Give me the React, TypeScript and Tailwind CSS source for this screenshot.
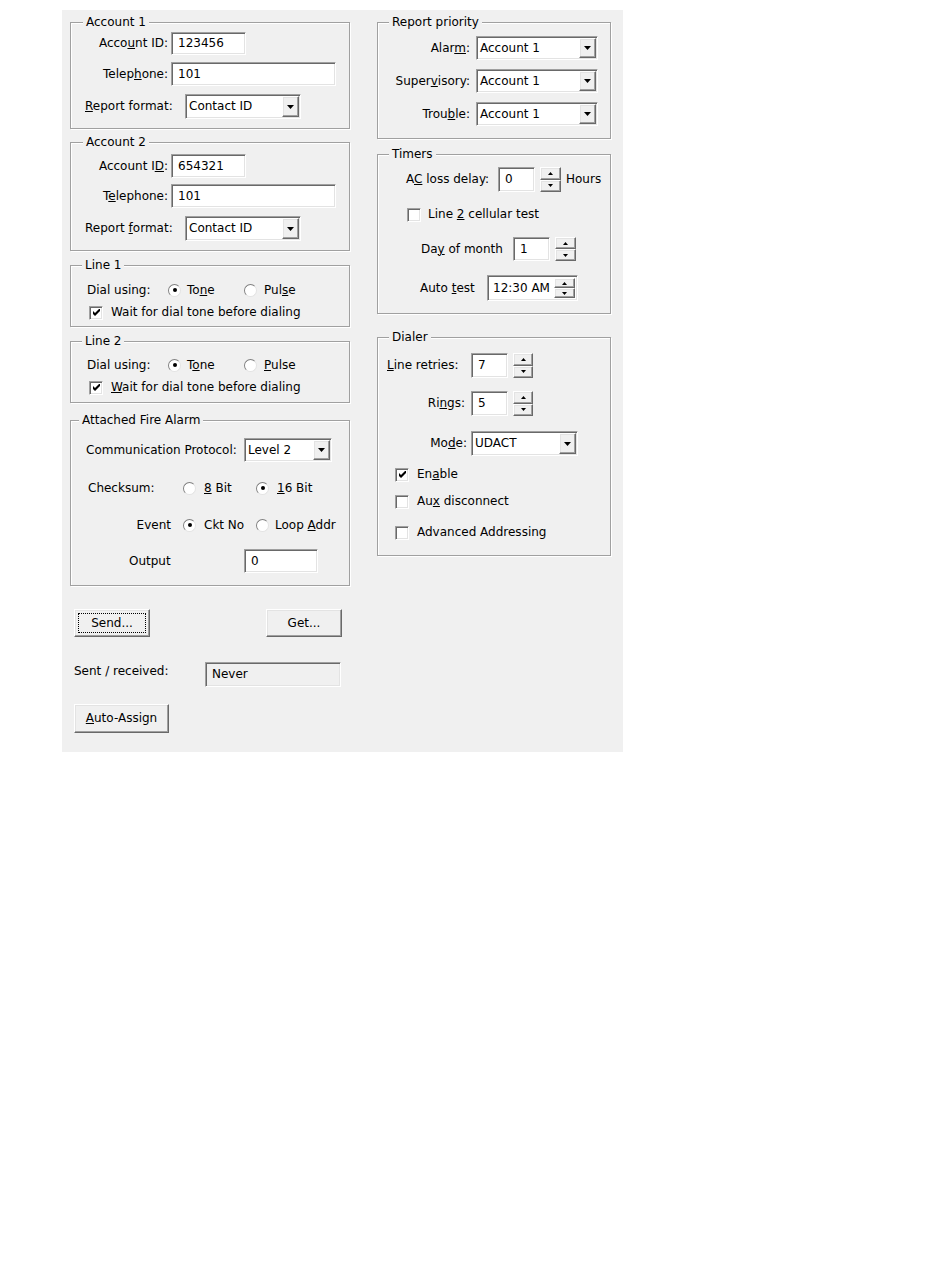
import React from 'react'

const sunken =
  'border border-t-[#a0a0a0] border-l-[#a0a0a0] border-r-white border-b-white shadow-[inset_1px_1px_0_#696969,inset_-1px_-1px_0_#e3e3e3]'
const raised =
  'border border-t-white border-l-white border-r-[#696969] border-b-[#696969] shadow-[inset_-1px_-1px_0_#a0a0a0,inset_1px_1px_0_#e3e3e3]'

function Group({
  title,
  legend,
  className,
  children,
}: {
  title: React.ReactNode
  legend: string
  className: string
  children: React.ReactNode
}) {
  return (
    <fieldset
      className={`flex shrink-0 flex-col border border-[#a0a0a0] shadow-[inset_1px_1px_0_#fff,1px_1px_0_#fff] ${className}`}
    >
      <legend className={`bg-[#f0f0f0] px-[3px] leading-[14px] ${legend}`}>{title}</legend>
      {children}
    </fieldset>
  )
}

function Edit({ value, className, bg = 'bg-white' }: { value: string; className: string; bg?: string }) {
  return (
    <div className={`flex shrink-0 items-center pl-[6px] ${sunken} ${bg} ${className}`}>
      <span>{value}</span>
    </div>
  )
}

function DownArrow() {
  return (
    <svg width="7" height="4" viewBox="0 0 7 4">
      <path d="M0 0h7L3.5 4z" fill="#000" />
    </svg>
  )
}

function Combo({ value, className }: { value: string; className: string }) {
  return (
    <div className={`flex shrink-0 items-stretch bg-white ${sunken} ${className}`}>
      <span className="flex flex-1 items-center pl-[3px]">{value}</span>
      <div className="flex p-[1px]">
        <div className={`flex w-[17px] items-center justify-center bg-[#f0f0f0] ${raised}`}>
          <DownArrow />
        </div>
      </div>
    </div>
  )
}

function SpinBtn({ up }: { up?: boolean }) {
  return (
    <div className={`flex flex-1 items-center justify-center bg-[#f0f0f0] ${raised}`}>
      <svg width="5" height="3" viewBox="0 0 5 3">
        <path d={up ? 'M2.5 0L5 3H0z' : 'M0 0h5L2.5 3z'} fill="#000" />
      </svg>
    </div>
  )
}

function Spinner({ className }: { className: string }) {
  return (
    <div className={`flex shrink-0 flex-col ${className}`}>
      <SpinBtn up />
      <SpinBtn />
    </div>
  )
}

function Radio({ checked }: { checked?: boolean }) {
  return (
    <span className="flex h-[13px] w-[13px] shrink-0 items-center justify-center rounded-full border border-t-[#808080] border-l-[#808080] border-r-[#e3e3e3] border-b-[#e3e3e3] bg-white">
      {checked && <span className="h-[4px] w-[4px] rounded-full bg-black" />}
    </span>
  )
}

function Check({ checked }: { checked?: boolean }) {
  return (
    <span className={`flex h-[14px] w-[14px] shrink-0 items-center justify-center bg-white ${sunken}`}>
      {checked && (
        <svg width="7" height="7" viewBox="0 0 7 7">
          <polygon points="0,2 2,4 7,-1 7,2 2,7 0,5" fill="#000" />
        </svg>
      )}
    </span>
  )
}

function Button({ children, className, focus }: { children: React.ReactNode; className: string; focus?: boolean }) {
  return (
    <div className={`flex shrink-0 bg-[#f0f0f0] p-[3px] ${raised} ${className}`}>
      <span
        className={`flex flex-1 items-center justify-center border border-dotted ${focus ? 'border-black' : 'border-transparent'}`}
      >
        {children}
      </span>
    </div>
  )
}

export default function App() {
  return (
    <div className="min-h-[1267px] bg-white pl-[62px] pt-[10px] font-['DejaVu_Sans',sans-serif] text-[12px] leading-[15px] text-black">
      <div className="flex h-[742px] w-[561px] gap-[27px] bg-[#f0f0f0] pl-[8px]">
        {/* left column */}
        <div className="flex w-[280px] flex-col">
          <Group title="Account 1" legend="ml-[12px]" className="mt-[5px] h-[114px]">
            <div className="mt-[3px] flex items-center">
              <span className="w-[97px] text-right">
                Acco<u>u</u>nt ID:
              </span>
              <Edit value="123456" className="ml-[3px] h-[23px] w-[75px]" />
            </div>
            <div className="mt-[7px] flex items-center">
              <span className="w-[97px] text-right">
                Telep<u>h</u>one:
              </span>
              <Edit value="101" className="ml-[3px] h-[24px] w-[165px]" />
            </div>
            <div className="mt-[8px] flex items-center">
              <span className="ml-[14px] w-[100px]">
                <u>R</u>eport format:
              </span>
              <Combo value="Contact ID" className="h-[25px] w-[116px]" />
            </div>
          </Group>

          <Group title="Account 2" legend="ml-[12px]" className="mt-[6px] h-[116px]">
            <div className="mt-[5px] flex items-center">
              <span className="w-[97px] text-right">
                Account I<u>D</u>:
              </span>
              <Edit value="654321" className="ml-[3px] h-[24px] w-[75px]" />
            </div>
            <div className="mt-[6px] flex items-center">
              <span className="w-[97px] text-right">
                T<u>e</u>lephone:
              </span>
              <Edit value="101" className="ml-[3px] h-[24px] w-[165px]" />
            </div>
            <div className="mt-[8px] flex items-center">
              <span className="ml-[14px] w-[100px]">
                Report <u>f</u>ormat:
              </span>
              <Combo value="Contact ID" className="h-[25px] w-[116px]" />
            </div>
          </Group>

          <Group title="Line 1" legend="ml-[11px]" className="mt-[7px] h-[69px]">
            <div className="mt-[10px] flex h-[16px] items-center">
              <span className="ml-[16px] w-[81px]">Dial using:</span>
              <span className="flex w-[76px] items-center gap-[6px]">
                <Radio checked />
                <span>
                  To<u>n</u>e
                </span>
              </span>
              <span className="flex items-center gap-[7px]">
                <Radio />
                <span>
                  Pul<u>s</u>e
                </span>
              </span>
            </div>
            <div className="mt-[7px] flex items-center gap-[8px] pl-[18px]">
              <Check checked />
              <span>Wait for dial tone before dialing</span>
            </div>
          </Group>

          <Group title="Line 2" legend="ml-[11px]" className="mt-[7px] h-[69px]">
            <div className="mt-[9px] flex h-[16px] items-center">
              <span className="ml-[16px] w-[81px]">Dial using:</span>
              <span className="flex w-[76px] items-center gap-[6px]">
                <Radio checked />
                <span>
                  T<u>o</u>ne
                </span>
              </span>
              <span className="flex items-center gap-[7px]">
                <Radio />
                <span>
                  <u>P</u>ulse
                </span>
              </span>
            </div>
            <div className="mt-[7px] flex items-center gap-[8px] pl-[18px]">
              <Check checked />
              <span>
                <u>W</u>ait for dial tone before dialing
              </span>
            </div>
          </Group>

          <Group title="Attached Fire Alarm" legend="ml-[8px]" className="mt-[10px] h-[173px]">
            <div className="mt-[11px] flex items-center">
              <span className="ml-[15px] w-[158px]">Communication Protocol:</span>
              <Combo value="Level 2" className="h-[24px] w-[88px]" />
            </div>
            <div className="mt-[18px] flex h-[16px] items-center">
              <span className="ml-[17px] w-[95px]">Checksum:</span>
              <span className="flex w-[73px] items-center gap-[8px]">
                <Radio />
                <span>
                  <u>8</u> Bit
                </span>
              </span>
              <span className="flex items-center gap-[8px]">
                <Radio checked />
                <span>
                  <u>1</u>6 Bit
                </span>
              </span>
            </div>
            <div className="mt-[21px] flex h-[16px] items-center">
              <span className="w-[100px] text-right">Event</span>
              <span className="ml-[12px] flex w-[73px] items-center gap-[8px]">
                <Radio checked />
                <span>Ckt No</span>
              </span>
              <span className="flex items-center gap-[6px]">
                <Radio />
                <span>
                  Loop <u>A</u>ddr
                </span>
              </span>
            </div>
            <div className="mt-[16px] flex items-center">
              <span className="ml-[58px] w-[115px]">Output</span>
              <Edit value="0" className="h-[24px] w-[74px]" />
            </div>
          </Group>

          <div className="mt-[23px] flex justify-between pl-[4px] pr-[8px]">
            <Button focus className="h-[28px] w-[76px]">
              Send...
            </Button>
            <Button className="h-[28px] w-[76px]">Get...</Button>
          </div>

          <div className="mt-[25px] flex items-start pl-[4px]">
            <span className="mt-[2px] w-[131px]">Sent / received:</span>
            <Edit value="Never" bg="bg-[#f0f0f0]" className="h-[25px] w-[136px]" />
          </div>

          <div className="mt-[17px] flex pl-[4px]">
            <Button className="h-[29px] w-[95px]">
              <span>
                <u>A</u>uto-Assign
              </span>
            </Button>
          </div>
        </div>

        {/* right column */}
        <div className="flex w-[234px] flex-col">
          <Group title="Report priority" legend="ml-[11px]" className="mt-[5px] h-[124px]">
            <div className="mt-[7px] flex items-center">
              <span className="w-[92px] text-right">
                Alar<u>m</u>:
              </span>
              <Combo value="Account 1" className="ml-[6px] h-[24px] w-[122px]" />
            </div>
            <div className="mt-[9px] flex items-center">
              <span className="w-[92px] text-right">
                Super<u>v</u>isory:
              </span>
              <Combo value="Account 1" className="ml-[6px] h-[24px] w-[122px]" />
            </div>
            <div className="mt-[9px] flex items-center">
              <span className="w-[92px] text-right">
                Trou<u>b</u>le:
              </span>
              <Combo value="Account 1" className="ml-[6px] h-[24px] w-[122px]" />
            </div>
          </Group>

          <Group title="Timers" legend="ml-[11px]" className="mt-[8px] h-[167px]">
            <div className="mt-[6px] flex items-center">
              <span className="ml-[28px] w-[92px]">
                A<u>C</u> loss delay:
              </span>
              <Edit value="0" className="h-[25px] w-[37px]" />
              <Spinner className="ml-[5px] h-[25px] w-[21px]" />
              <span className="ml-[5px]">Hours</span>
            </div>
            <div className="mt-[15px] flex items-center gap-[7px] pl-[29px]">
              <Check />
              <span>
                Line <u>2</u> cellular test
              </span>
            </div>
            <div className="mt-[15px] flex items-center">
              <span className="ml-[43px] w-[92px]">
                Da<u>y</u> of month
              </span>
              <Edit value="1" className="h-[24px] w-[37px]" />
              <Spinner className="ml-[5px] h-[24px] w-[21px]" />
            </div>
            <div className="mt-[14px] flex items-center">
              <span className="ml-[42px] w-[67px]">
                Auto <u>t</u>est
              </span>
              <div className={`flex h-[26px] w-[91px] items-center justify-between bg-white pl-[5px] pr-[2px] ${sunken}`}>
                <span>12:30 AM</span>
                <Spinner className="h-[20px] w-[21px]" />
              </div>
            </div>
          </Group>

          <Group title="Dialer" legend="ml-[11px]" className="mt-[16px] h-[226px]">
            <div className="mt-[9px] flex items-center">
              <span className="ml-[9px] w-[84px]">
                <u>L</u>ine retries:
              </span>
              <Edit value="7" className="h-[25px] w-[37px]" />
              <Spinner className="ml-[5px] h-[25px] w-[20px]" />
            </div>
            <div className="mt-[13px] flex items-center">
              <span className="w-[93px] pr-[6px] text-right">
                Ri<u>n</u>gs:
              </span>
              <Edit value="5" className="h-[25px] w-[37px]" />
              <Spinner className="ml-[5px] h-[25px] w-[20px]" />
            </div>
            <div className="mt-[15px] flex items-center">
              <span className="w-[93px] pr-[4px] text-right">
                Mo<u>d</u>e:
              </span>
              <Combo value="UDACT" className="h-[25px] w-[107px]" />
            </div>
            <div className="mt-[11px] flex items-center gap-[8px] pl-[17px]">
              <Check checked />
              <span>
                En<u>a</u>ble
              </span>
            </div>
            <div className="mt-[12px] flex items-center gap-[8px] pl-[17px]">
              <Check />
              <span>
                Au<u>x</u> disconnect
              </span>
            </div>
            <div className="mt-[16px] flex items-center gap-[8px] pl-[17px]">
              <Check />
              <span>Advanced Addressing</span>
            </div>
          </Group>
        </div>
      </div>
    </div>
  )
}
